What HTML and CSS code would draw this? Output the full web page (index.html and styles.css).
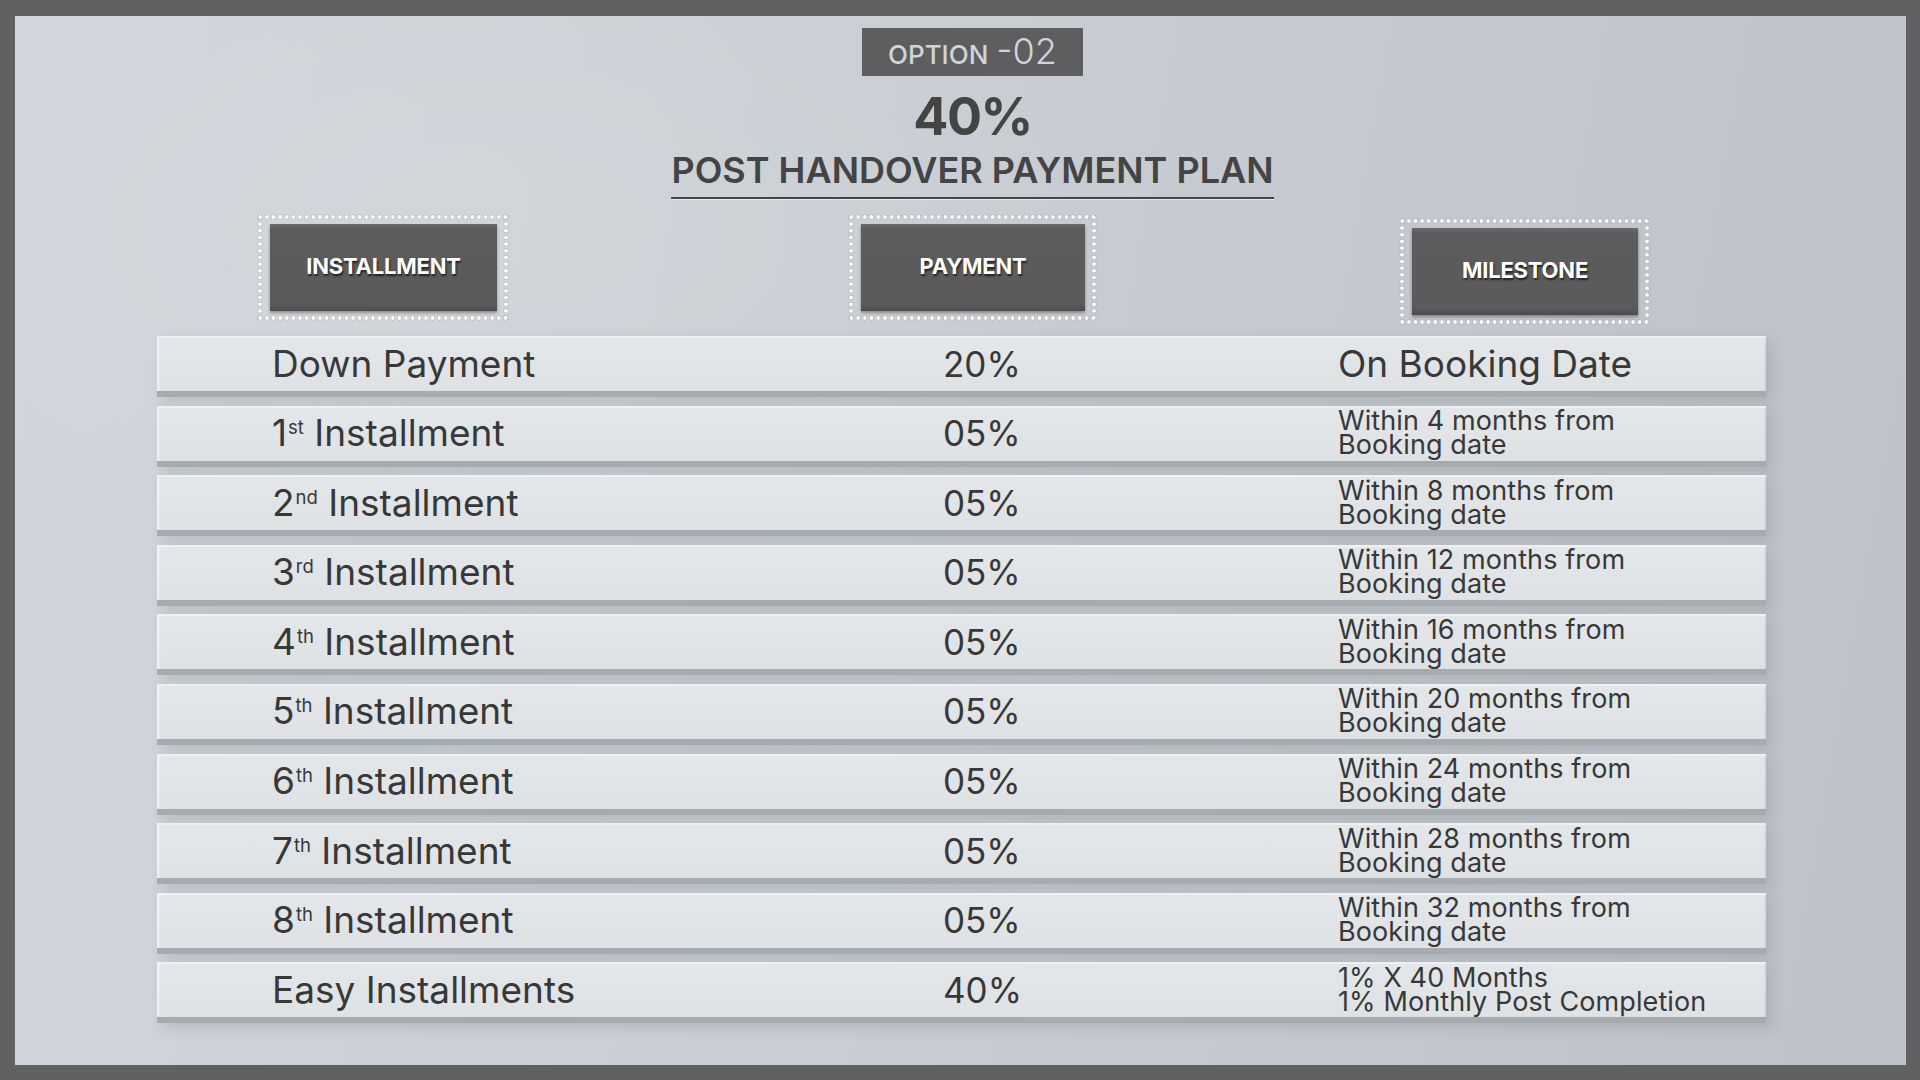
FILE: index.html
```html
<!DOCTYPE html>
<html lang="en">
<head>
<meta charset="utf-8">
<title>Option 02 – 40% Post Handover Payment Plan</title>
<link rel="stylesheet" href="styles.css">
</head>
<body>
<div class="frame">
  <main class="canvas">
    <header class="top">
      <div class="badge"><span class="badge-word">OPTION</span><span class="badge-num">-02</span></div>
      <div class="pct">40%</div>
      <h1 class="title">POST HANDOVER PAYMENT PLAN</h1>
    </header>
    <div class="heads">
      <div class="head head-inst"><div class="head-box">INSTALLMENT</div></div>
      <div class="head head-pay"><div class="head-box">PAYMENT</div></div>
      <div class="head head-mile"><div class="head-box">MILESTONE</div></div>
    </div>
    <div class="table">
      <div class="row"><div class="c1">Down Payment</div><div class="c2">20%</div><div class="c3 big">On Booking Date</div></div>
      <div class="row"><div class="c1">1<sup class="ord">st</sup> Installment</div><div class="c2">05%</div><div class="c3">Within 4 months from<br>Booking date</div></div>
      <div class="row"><div class="c1">2<sup class="ord">nd</sup> Installment</div><div class="c2">05%</div><div class="c3">Within 8 months from<br>Booking date</div></div>
      <div class="row"><div class="c1">3<sup class="ord">rd</sup> Installment</div><div class="c2">05%</div><div class="c3">Within 12 months from<br>Booking date</div></div>
      <div class="row"><div class="c1">4<sup class="ord">th</sup> Installment</div><div class="c2">05%</div><div class="c3">Within 16 months from<br>Booking date</div></div>
      <div class="row"><div class="c1">5<sup class="ord">th</sup> Installment</div><div class="c2">05%</div><div class="c3">Within 20 months from<br>Booking date</div></div>
      <div class="row"><div class="c1">6<sup class="ord">th</sup> Installment</div><div class="c2">05%</div><div class="c3">Within 24 months from<br>Booking date</div></div>
      <div class="row"><div class="c1">7<sup class="ord">th</sup> Installment</div><div class="c2">05%</div><div class="c3">Within 28 months from<br>Booking date</div></div>
      <div class="row"><div class="c1">8<sup class="ord">th</sup> Installment</div><div class="c2">05%</div><div class="c3">Within 32 months from<br>Booking date</div></div>
      <div class="row"><div class="c1">Easy Installments</div><div class="c2">40%</div><div class="c3">1% X 40 Months<br>1% Monthly Post Completion</div></div>
    </div>
  </main>
</div>
</body>
</html>
```
FILE: styles.css
```css
* { box-sizing: border-box; margin: 0; padding: 0; }
html, body { width: 1920px; height: 1080px; overflow: hidden; }
body {
  background: #616161;
  font-family: Inter, "Noto Sans", "Liberation Sans", sans-serif;
  color: #383838;
}
.frame {
  width: 1920px;
  height: 1080px;
  padding: 16px 14px 15px 15px;
  background: #616161;
}
.canvas {
  height: 100%;
  display: flex;
  flex-direction: column;
  background:
    radial-gradient(ellipse 900px 500px at 25% 20%, rgba(255,255,255,0.10), rgba(255,255,255,0) 70%),
    linear-gradient(100deg, #d0d6db 0%, #c8ced3 45%, #bdc2c8 100%);
}
.top {
  display: flex;
  flex-direction: column;
  align-items: center;
  padding-left: 24px;
  padding-top: 12px;
}
.badge {
  width: 221px;
  height: 48px;
  background: #5e5e5e;
  display: flex;
  align-items: baseline;
  justify-content: center;
  padding-top: 5px;
  color: #cfd5da;
}
.badge-word {
  font-size: 26px;
  font-weight: 500;
  line-height: 26px;
  margin-right: 8px;
}
.badge-num {
  font-size: 36px;
  font-weight: 300;
  line-height: 36px;
}
.pct {
  margin-top: 13px;
  font-size: 52px;
  font-weight: 700;
  line-height: 56px;
  color: #444;
  letter-spacing: -1.5px;
}
.title {
  margin-top: 5px;
  font-size: 36px;
  font-weight: 600;
  line-height: 40px;
  color: #444;
  padding-bottom: 7px;
  border-bottom: 2px solid #454545;
  box-shadow: 0 1px 0 rgba(255,255,255,0.55);
}
.heads {
  margin-top: 15px;
  height: 122px;
  display: flex;
  align-items: flex-start;
  padding-left: 242px;
}
.head {
  --dot: radial-gradient(circle, #ffffff 1.6px, rgba(140,140,140,0.55) 2.2px, rgba(140,140,140,0) 2.8px);
  height: 107px;
  padding: 10px 12px 10px 13px;
  background:
    var(--dot) left top / 6.7px 6px round no-repeat,
    var(--dot) left bottom / 6.7px 6px round no-repeat,
    var(--dot) left top / 6px 6.7px no-repeat round,
    var(--dot) right top / 6px 6.7px no-repeat round;
}
.head-inst { width: 252px; }
.head-pay { width: 249px; margin-left: 339px; }
.head-mile { width: 251px; margin-left: 302px; margin-top: 4px; }
.head-box {
  height: 87px;
  background: linear-gradient(#6a6a6a 0px, #5c5c5c 5px, #5b5b5b 80px, #4c4c4c 87px);
  box-shadow: 0 2px 3px rgba(0,0,0,0.35);
  display: flex;
  align-items: center;
  justify-content: center;
  color: #fff;
  font-size: 22px;
  font-weight: 700;
  letter-spacing: -0.2px;
  text-shadow: 1px 2px 2px rgba(0,0,0,0.65);
  padding-bottom: 3px;
}
.table {
  display: flex;
  flex-direction: column;
  gap: 8.6px;
  margin: 0 140px 0 142px;
}
.row {
  height: 61px;
  display: grid;
  grid-template-columns: 786px 395px 1fr;
  align-items: center;
  background: linear-gradient(#e4e7ea, #dee2e5);
  border-bottom: 6px solid #a6abb0;
  box-shadow:
    inset 0 2px 0 #eef0f2,
    inset 3px 0 2px -1px rgba(255,255,255,0.6),
    inset -2px 0 2px -1px rgba(0,0,0,0.08),
    6px 5px 12px rgba(70,80,90,0.16);
}
.c1 {
  padding-left: 115px;
  font-size: 37px;
  line-height: 44px;
  white-space: nowrap;
}
.ord {
  font-size: 0.5em;
  vertical-align: 12px;
  line-height: 0;
  margin-left: 1px;
}
.c2 {
  font-size: 35px;
  line-height: 44px;
}
.c3 {
  font-size: 27px;
  line-height: 24px;
  letter-spacing: 0.1px;
  white-space: nowrap;
}
.c3.big {
  font-size: 37px;
  line-height: 44px;
  letter-spacing: 0;
}
```
